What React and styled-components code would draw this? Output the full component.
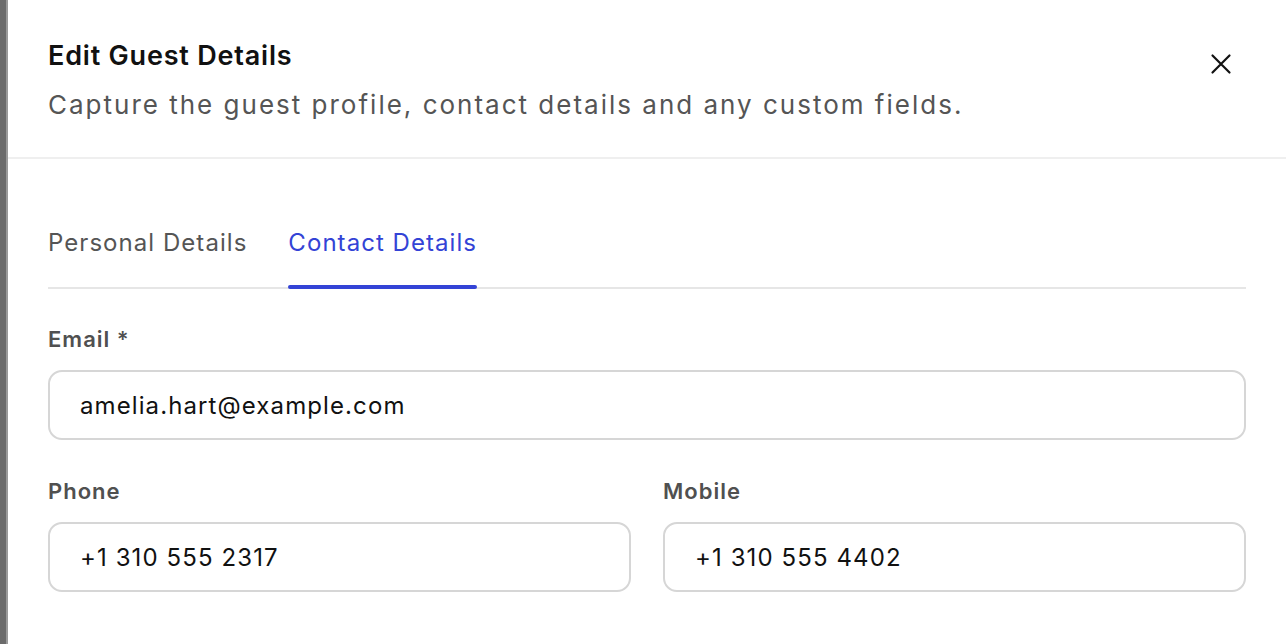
import React, { useState } from 'react';
import styled, { createGlobalStyle } from 'styled-components';

const GlobalStyle = createGlobalStyle`
  * { box-sizing: border-box; }
  html, body { margin: 0; padding: 0; }
  body {
    font-family: Inter, "Noto Sans", "Liberation Sans", sans-serif;
    background: #6b6b6b;
    -webkit-font-smoothing: antialiased;
  }
`;

const Backdrop = styled.div`
  display: flex;
  height: 644px;
  overflow: hidden;
`;

const Edge = styled.div`
  width: 8px;
  flex-shrink: 0;
  background: #6b6b6b;
  border-right: 2px solid #9a9a9a;
`;

const Sheet = styled.div`
  flex: 1;
  background: #fff;
  display: flex;
  flex-direction: column;
`;

const Header = styled.header`
  display: flex;
  justify-content: space-between;
  align-items: flex-start;
  padding: 40px 40px 36px 40px;
  border-bottom: 2px solid #efefef;
`;

const Title = styled.h2`
  margin: 0;
  font-size: 27px;
  line-height: 32px;
  font-weight: 600;
  color: #111;
  letter-spacing: 0.8px;
`;

const Subtitle = styled.p`
  margin: 17px 0 0 0;
  font-size: 26px;
  line-height: 32px;
  color: #555;
  letter-spacing: 2px;
`;

const CloseButton = styled.button`
  margin-top: 10px;
  margin-right: 11px;
  width: 28px;
  height: 28px;
  padding: 0;
  border: none;
  background: none;
  display: flex;
  align-items: center;
  justify-content: center;
  cursor: pointer;
  color: #111;
`;

const Body = styled.div`
  padding: 40px 40px 0 40px;
`;

const TabList = styled.div`
  display: flex;
  gap: 41px;
  border-bottom: 2px solid #e6e6e6;
`;

const Tab = styled.button`
  position: relative;
  padding: 28px 0 28px 0;
  border: none;
  background: none;
  font-family: inherit;
  font-size: 24px;
  line-height: 32px;
  letter-spacing: 1.05px;
  color: ${(p) => (p.$active ? '#3343d6' : '#555')};
  cursor: pointer;

  &::after {
    content: '';
    position: absolute;
    left: 0;
    right: 0;
    bottom: -2px;
    height: 4px;
    border-radius: 2px;
    background: ${(p) => (p.$active ? '#3343d6' : 'transparent')};
  }
`;

const Field = styled.div`
  display: flex;
  flex-direction: column;
  gap: 17px;
`;

const Label = styled.label`
  font-size: 22px;
  line-height: 28px;
  font-weight: 600;
  color: #505050;
  letter-spacing: 1px;
`;

const Input = styled.input`
  width: 100%;
  height: 70px;
  padding: 0 30px;
  border: 2px solid #d6d6d6;
  border-radius: 14px;
  font-family: inherit;
  font-size: 24px;
  letter-spacing: 1.1px;
  color: #111;
  background: #fff;
  outline: none;
`;

const Form = styled.div`
  display: flex;
  flex-direction: column;
  gap: 37px;
  padding-top: 36px;
`;

const Row = styled.div`
  display: grid;
  grid-template-columns: 1fr 1fr;
  gap: 32px;
`;

function XIcon() {
  return (
    <svg width="24" height="24" viewBox="0 0 24 24" fill="none" stroke="currentColor" strokeWidth="2.2" strokeLinecap="round">
      <path d="M3.5 3.5l17 17M20.5 3.5l-17 17" />
    </svg>
  );
}

export default function App() {
  const [tab, setTab] = useState('contact');
  return (
    <>
      <GlobalStyle />
      <Backdrop>
        <Edge />
        <Sheet>
          <Header>
            <div>
              <Title>Edit Guest Details</Title>
              <Subtitle>Capture the guest profile, contact details and any custom fields.</Subtitle>
            </div>
            <CloseButton aria-label="Close">
              <XIcon />
            </CloseButton>
          </Header>
          <Body>
            <TabList>
              <Tab $active={tab === 'personal'} onClick={() => setTab('personal')}>Personal Details</Tab>
              <Tab $active={tab === 'contact'} onClick={() => setTab('contact')}>Contact Details</Tab>
            </TabList>
            <Form>
              <Field>
                <Label>Email *</Label>
                <Input defaultValue="amelia.hart@example.com" />
              </Field>
              <Row>
                <Field>
                  <Label>Phone</Label>
                  <Input defaultValue="+1 310 555 2317" />
                </Field>
                <Field>
                  <Label>Mobile</Label>
                  <Input defaultValue="+1 310 555 4402" />
                </Field>
              </Row>
            </Form>
          </Body>
        </Sheet>
      </Backdrop>
    </>
  );
}
